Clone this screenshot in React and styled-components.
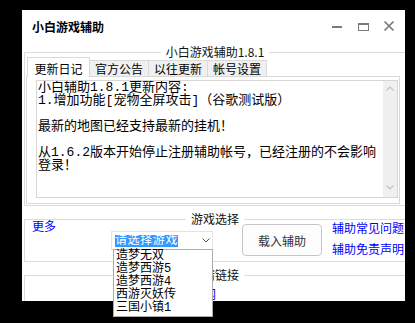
import styled, { createGlobalStyle } from "styled-components";

const GlobalStyle = createGlobalStyle`
  * { box-sizing: border-box; }
  html, body {
    margin: 0;
    padding: 0;
    width: 415px;
    height: 323px;
    background: #000;
    overflow: hidden;
  }
  body {
    font-family: "Noto Sans CJK SC", "Noto Sans", sans-serif;
    font-size: 12px;
    color: #000;
  }
`;

const Window = styled.div`
  position: relative;
  margin: 10px 0 0 22px;
  width: 383px;
  height: 291px;
  background: #fff;
  display: flex;
  flex-direction: column;
`;

const TitleBar = styled.div`
  height: 32px;
  flex: none;
  display: flex;
  align-items: center;
  justify-content: space-between;
  padding: 0 3px 0 10px;
`;

const Title = styled.div`
  font-size: 12px;
  font-weight: bold;
`;

const Controls = styled.div`
  display: flex;
`;

const Ctrl = styled.div`
  width: 26px;
  height: 32px;
  display: flex;
  align-items: center;
  justify-content: center;
`;

const Group = styled.fieldset`
  margin: ${(p) => p.$top}px 0 0 2px;
  padding: 0 0 ${(p) => p.$pb || 0}px 0;
  border: 1px solid #dcdcdc;
  border-right: none;
  min-width: 0;
  flex: none;
  ${(p) => p.$open && "border-bottom: none; flex: 1; min-height: 0;"}
`;

const Caption = styled.legend`
  margin: 0 auto;
  padding: 0 5px;
  line-height: 10px;
  font-size: 12px;
  color: #111;
`;

const TabRow = styled.div`
  height: 19px;
  display: flex;
  align-items: flex-end;
  margin-left: 2px;
`;

const Tab = styled.div`
  position: relative;
  border: 1px solid #d9d9d9;
  border-bottom: none;
  line-height: 15px;
  font-size: 12px;
  background: ${(p) => (p.$active ? "#fff" : "#f0f0f0")};
  padding: ${(p) => (p.$active ? "3px 6.5px 1px" : "0 5px")};
  margin-left: ${(p) => (p.$first ? 0 : -1)}px;
  margin-bottom: ${(p) => (p.$active ? -1 : 0)}px;
  z-index: ${(p) => (p.$active ? 1 : 0)};
`;

const Panel = styled.div`
  margin-left: 1px;
  width: 374px;
  height: 128px;
  border: 1px solid #d9d9d9;
  padding: 3px 1px 5px 9px;
`;

const Memo = styled.div`
  height: 118px;
  border: 1px solid #d6d6d6;
  display: flex;
`;

const MemoText = styled.div`
  flex: 1;
  padding-left: 1px;
  font-family: "Liberation Mono", "Noto Sans CJK SC", monospace;
  font-size: 13px;
  line-height: 13px;
  white-space: pre;
  overflow: hidden;
`;

const ScrollBar = styled.div`
  width: 14px;
  background: #f0f0f0;
  display: flex;
  flex-direction: column;
  justify-content: space-between;
  padding-bottom: 3px;
`;

const Arrow = styled.div`
  height: 14px;
  display: flex;
  align-items: center;
  justify-content: center;
`;

const SelectRow = styled.div`
  height: 37px;
  display: flex;
  align-items: flex-start;
  padding-left: 7px;
`;

const Link = styled.div`
  color: #0000ff;
  font-size: 12px;
  line-height: ${(p) => p.$lh || 16}px;
  margin-top: ${(p) => p.$mt || 0}px;
  margin-left: ${(p) => p.$ml || 0}px;
  white-space: nowrap;
`;

const LinkColumn = styled.div`
  margin-left: 10px;
  margin-top: -7px;
  display: flex;
  flex-direction: column;
`;

const SelectBox = styled.div`
  position: relative;
  margin-left: 55px;
  margin-top: 7px;
  width: 102px;
  height: 19px;
  border: 1px solid #e3e3e3;
  display: flex;
  align-items: center;
  justify-content: space-between;
  padding: 0 2px 0 3px;
`;

const Picked = styled.span`
  background: #3399ff;
  color: #fff;
  font-family: "Liberation Mono", "Noto Sans CJK SC", monospace;
  font-size: 12px;
  line-height: 12px;
  letter-spacing: 0.6px;
`;

const DropList = styled.div`
  position: absolute;
  top: 100%;
  left: 1px;
  width: 100px;
  height: 68px;
  background: #fff;
  border: 1px solid #acacac;
  padding: 0 0 0 2px;
  z-index: 5;
`;

const DropItem = styled.div`
  font-family: "Liberation Mono", "Noto Sans CJK SC", monospace;
  font-size: 12px;
  line-height: 13px;
  white-space: nowrap;
`;

const LoadButton = styled.button`
  margin-left: 29px;
  width: 80px;
  height: 32px;
  padding: 0;
  border: 1px solid #c6c6c6;
  border-radius: 4px;
  background: #fdfdfd;
  color: #333;
  font-family: "Noto Sans CJK SC", sans-serif;
  font-size: 12px;
`;

const memo = [
  "小白辅助1.8.1更新内容:",
  "1.增加功能[宠物全屏攻击]（谷歌测试版）",
  "",
  "最新的地图已经支持最新的挂机！",
  "",
  "从1.6.2版本开始停止注册辅助帐号，已经注册的不会影响",
  "登录！",
].join("\n");

const games = ["造梦无双", "造梦西游5", "造梦西游4", "西游灭妖传", "三国小镇1"];
const tabs = ["更新日记", "官方公告", "以往更新", "帐号设置"];

export default function App() {
  return (
    <>
      <GlobalStyle />
      <Window>
        <TitleBar>
          <Title>小白游戏辅助</Title>
          <Controls>
            <Ctrl>
              <svg width="12" height="12" viewBox="0 0 12 12">
                <rect x="1" y="6" width="10" height="2" fill="#7a7a7a" />
              </svg>
            </Ctrl>
            <Ctrl>
              <svg width="12" height="12" viewBox="0 0 12 12">
                <rect x="1.5" y="3.5" width="10" height="7" fill="none" stroke="#7a7a7a" />
                <rect x="1" y="3" width="11" height="2" fill="#7a7a7a" />
              </svg>
            </Ctrl>
            <Ctrl>
              <svg width="12" height="12" viewBox="0 0 12 12">
                <path d="M1.5 1.5L10.5 10.5M10.5 1.5L1.5 10.5" stroke="#7a7a7a" strokeWidth="1.7" />
              </svg>
            </Ctrl>
          </Controls>
        </TitleBar>

        <Group $top={5} $pb={1}>
          <Caption>小白游戏辅助1.8.1</Caption>
          <TabRow>
            {tabs.map((t, i) => (
              <Tab key={t} $active={i === 0} $first={i === 0}>
                {t}
              </Tab>
            ))}
          </TabRow>
          <Panel>
            <Memo>
              <MemoText>{memo}</MemoText>
              <ScrollBar>
                <Arrow>
                  <svg width="8" height="5" viewBox="0 0 8 5">
                    <path d="M0.5 4.5L4 1L7.5 4.5" fill="none" stroke="#c2c2c2" strokeWidth="1.2" />
                  </svg>
                </Arrow>
                <Arrow>
                  <svg width="8" height="5" viewBox="0 0 8 5">
                    <path d="M0.5 0.5L4 4L7.5 0.5" fill="none" stroke="#c2c2c2" strokeWidth="1.2" />
                  </svg>
                </Arrow>
              </ScrollBar>
            </Memo>
          </Panel>
        </Group>

        <Group $top={8}>
          <Caption>游戏选择</Caption>
          <SelectRow>
            <Link $mt={-6}>更多</Link>
            <SelectBox>
              <Picked>请选择游戏</Picked>
              <svg width="8" height="5" viewBox="0 0 8 5">
                <path d="M0.5 0.5L4 4L7.5 0.5" fill="none" stroke="#555" strokeWidth="1" />
              </svg>
              <DropList>
                {games.map((g) => (
                  <DropItem key={g}>{g}</DropItem>
                ))}
              </DropList>
            </SelectBox>
            <LoadButton>载入辅助</LoadButton>
            <LinkColumn>
              <Link $lh={21}>辅助常见问题</Link>
              <Link $lh={21}>辅助免责声明</Link>
            </LinkColumn>
          </SelectRow>
        </Group>

        <Group $top={8} $open>
          <Caption>友情链接</Caption>
          <Link $lh={14} $mt={7} $ml={143}>小白官网</Link>
        </Group>
      </Window>
    </>
  );
}
